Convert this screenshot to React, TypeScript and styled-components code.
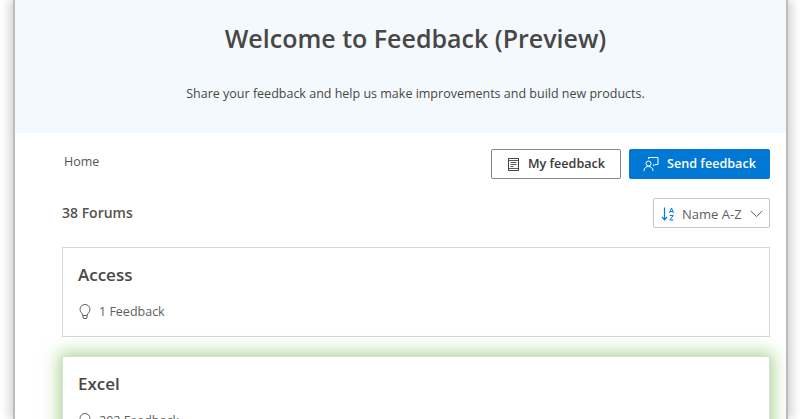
import React from "react";
import styled, { createGlobalStyle } from "styled-components";

const Global = createGlobalStyle`
  html, body { margin: 0; padding: 0; background: #fff; overflow: hidden; }
  body { font-family: "Open Sans", "Noto Sans", "Liberation Sans", sans-serif; color: #323130; }
`;

const Viewport = styled.div`
  width: 800px;
  height: 419px;
  overflow: hidden;
  padding: 0 12px 0 13px;
  box-sizing: border-box;
`;

const Frame = styled.div`
  height: 419px;
  background: #fff;
  border-left: 2px solid #bdbdbd;
  border-right: 2px solid #bdbdbd;
  box-shadow: -5px 0 8px rgba(0,0,0,.14), 5px 0 8px rgba(0,0,0,.14);
`;

const Hero = styled.header`
  height: 133px;
  background: #f3f9fd;
  box-sizing: border-box;
  padding: 20px 0 0 30px;
  text-align: center;
`;

const Title = styled.h1`
  margin: 0;
  font-size: 25px;
  line-height: 36px;
  font-weight: 600;
  color: #484746;
`;

const Subtitle = styled.p`
  margin: 28px 0 0;
  font-size: 12.5px;
  line-height: 20px;
  color: #484644;
`;

const Main = styled.main`
  padding: 16px 16px 0 47px;
`;

const TopRow = styled.div`
  display: flex;
  align-items: flex-start;
  justify-content: space-between;
  height: 30px;
`;

const Crumb = styled.span`
  margin: 3px 0 0 2px;
  font-size: 12.5px;
  line-height: 19px;
  color: #555;
`;

const Actions = styled.div`
  display: flex;
  gap: 8px;
`;

const Button = styled.button<{ $primary?: boolean; $w: number }>`
  width: ${(p) => p.$w}px;
  height: 30px;
  box-sizing: border-box;
  display: flex;
  align-items: center;
  justify-content: center;
  gap: 8px;
  padding: 0;
  border-radius: 2px;
  border: 1px solid ${(p) => (p.$primary ? "#0078d4" : "#8a8886")};
  background: ${(p) => (p.$primary ? "#0078d4" : "#fff")};
  color: ${(p) => (p.$primary ? "#fff" : "#3b3a39")};
  font: 600 12.6px/18px "Open Sans", sans-serif;
`;

const ForumBar = styled.div`
  display: flex;
  align-items: center;
  justify-content: space-between;
  height: 30px;
  margin-top: 19px;
`;

const Count = styled.h2`
  margin: 0;
  font-size: 14px;
  font-weight: 600;
  line-height: 20px;
  color: #555351;
`;

const Select = styled.div`
  width: 117px;
  height: 30px;
  box-sizing: border-box;
  display: flex;
  align-items: center;
  padding: 1px 6px 0 7px;
  border: 1px solid #c8c6c4;
  border-radius: 2px;
  font-size: 13px;
  color: #605e5c;
`;

const SelectLabel = styled.span`
  margin-left: 7px;
  flex: 1;
  white-space: nowrap;
`;

const Card = styled.article<{ $glow?: boolean }>`
  box-sizing: border-box;
  height: 90px;
  padding: 14px 15px;
  margin-bottom: 19px;
  background: #fff;
  border: 1px solid ${(p) => (p.$glow ? "#dcdcdc" : "#d6d6d6")};
  box-shadow: ${(p) => (p.$glow ? "0 0 16px 3px rgba(125, 190, 90, .65)" : "none")};
`;

const CardList = styled.section`
  margin-top: 19px;
`;

const CardTitle = styled.h3`
  margin: 0;
  font-size: 17px;
  line-height: 26px;
  font-weight: 600;
  color: #484746;
`;

const Meta = styled.div`
  display: flex;
  align-items: center;
  gap: 7px;
  margin-top: 15px;
  font-size: 12.5px;
  line-height: 18px;
  color: #605e5c;
`;

const DocIcon = () => (
  <svg width="13" height="15" viewBox="0 0 13 15" fill="none" stroke="#484644">
    <rect x="1.5" y="1.5" width="10" height="12" />
    <path d="M1.5 3.5h10M1.5 11.5h10M3.5 5.5h6M3.5 7.5h6M3.5 9.5h3" strokeWidth=".9" />
  </svg>
);

const SendIcon = () => (
  <svg width="16" height="16" viewBox="0 0 16 16" fill="none" stroke="#fff" strokeWidth="1">
    <path d="M5.5 3V1.5h9.5v7H12l-1.5 1.5V8.5" />
    <circle cx="5.5" cy="7.5" r="2.5" fill="#0078d4" />
    <path d="M1 15c0-3 2-4.5 4.5-4.5S10 12 10 15" />
  </svg>
);

const SortIcon = () => (
  <svg width="14" height="16" viewBox="0 0 14 16" fill="none" stroke="#0078d4">
    <path d="M3.5 1.5v12M1 11l2.5 2.8L6 11" strokeWidth="1.2" />
    <path d="M8.5 7l2-5 2 5M9.3 5.5h2.4M8.8 9.5h3.4l-3.4 4.5h3.6" strokeWidth="1" />
  </svg>
);

const Chevron = () => (
  <svg width="13" height="8" viewBox="0 0 13 8" fill="none" stroke="#605e5c">
    <path d="M.8 1l5.7 5.6L12.2 1" />
  </svg>
);

const BulbIcon = () => (
  <svg width="14" height="16" viewBox="0 0 14 16" fill="none" stroke="#605e5c">
    <path d="M4.8 11.5C4.5 9 2 8 2 5.5a5 5 0 0 1 10 0c0 2.5-2.5 3.5-2.8 6z" />
    <path d="M5 11.5v2.3l1 .7h2l1-.7v-2.3" />
  </svg>
);

const forums = [
  { name: "Access", count: "1 Feedback" },
  { name: "Excel", count: "202 Feedback", glow: true },
];

export default function App() {
  return (
    <Viewport>
      <Global />
      <Frame>
        <Hero>
          <Title>Welcome to Feedback (Preview)</Title>
          <Subtitle>Share your feedback and help us make improvements and build new products.</Subtitle>
        </Hero>
        <Main>
          <TopRow>
            <Crumb>Home</Crumb>
            <Actions>
              <Button $w={130}><DocIcon />My feedback</Button>
              <Button $primary $w={141}><SendIcon />Send feedback</Button>
            </Actions>
          </TopRow>
          <ForumBar>
            <Count>38 Forums</Count>
            <Select>
              <SortIcon />
              <SelectLabel>Name A-Z</SelectLabel>
              <Chevron />
            </Select>
          </ForumBar>
          <CardList>
            {forums.map((f) => (
              <Card key={f.name} $glow={f.glow}>
                <CardTitle>{f.name}</CardTitle>
                <Meta><BulbIcon />{f.count}</Meta>
              </Card>
            ))}
          </CardList>
        </Main>
      </Frame>
    </Viewport>
  );
}
